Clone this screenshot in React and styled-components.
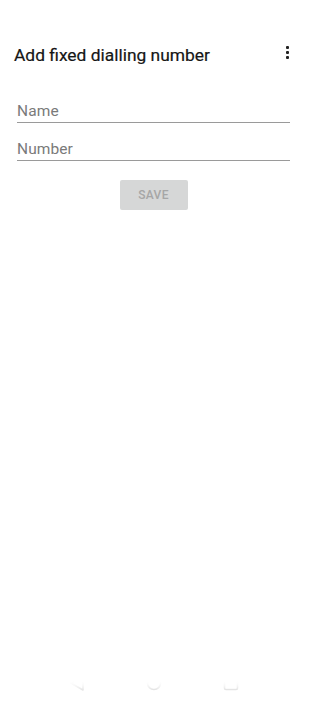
import React from 'react';
import styled, { createGlobalStyle } from 'styled-components';

const Global = createGlobalStyle`
  html, body { margin: 0; padding: 0; background: #fff; }
  body { font-family: Roboto, "Noto Sans", sans-serif; }
`;

const Screen = styled.div`
  width: 307px;
  height: 704px;
  display: flex;
  flex-direction: column;
  background: #ffffff;
`;

const Toolbar = styled.div`
  height: 56px;
  margin-top: 26px;
  display: flex;
  align-items: center;
  justify-content: space-between;
  padding: 0 12px 0 14px;
`;

const Title = styled.div`
  font-size: 17.4px;
  font-weight: 400;
  color: #161616;
  line-height: 20px;
  margin-top: 1px;
  -webkit-text-stroke: 0.2px #161616;
`;

const MoreButton = styled.div`
  display: flex;
  flex-direction: column;
  gap: 2px;
  margin-top: -3px;
  margin-right: 6px;
  span {
    width: 3px;
    height: 3px;
    background: #222;
    border-radius: 1px;
  }
`;

const Form = styled.div`
  display: flex;
  flex-direction: column;
  padding: 19px 17px 0 17px;
`;

const Field = styled.div`
  border-bottom: 1px solid #9a9a9a;
  padding: 0 0 1px 0;
  margin-bottom: ${({ gap }) => gap}px;
  font-size: 15.5px;
  color: #7a7a7a;
  line-height: 20px;
  letter-spacing: 0.1px;
`;

const Save = styled.div`
  align-self: center;
  width: 68px;
  height: 30px;
  margin-top: 3px;
  background: #d6d7d7;
  border-radius: 2px;
  color: #a6a6a6;
  font-size: 12px;
  font-weight: 500;
  display: flex;
  align-items: center;
  justify-content: center;
  letter-spacing: 0.3px;
`;

const Spacer = styled.div`
  flex: 1;
`;

const NavBar = styled.div`
  height: 42px;
  display: flex;
  justify-content: center;
  align-items: center;
`;

const NavSlot = styled.div`
  width: 77px;
  display: flex;
  justify-content: center;
`;

const Fade = () => (
  <defs>
    <linearGradient id="navfade" x1="0" y1="0" x2="0" y2="1">
      <stop offset="0.3" stopColor="#ffffff" stopOpacity="0" />
      <stop offset="1" stopColor="#e4e4e4" />
    </linearGradient>
  </defs>
);

export default function App() {
  return (
    <Screen>
      <Global />
      <Toolbar>
        <Title>Add fixed dialling number</Title>
        <MoreButton><span /><span /><span /></MoreButton>
      </Toolbar>
      <Form>
        <Field gap={16}>Name</Field>
        <Field gap={16}>Number</Field>
        <Save>SAVE</Save>
      </Form>
      <Spacer />
      <NavBar>
        <NavSlot>
          <svg width="16" height="16" viewBox="0 0 16 16">
            <Fade />
            <path d="M2 8 L14 1 L14 15 Z" stroke="url(#navfade)" strokeWidth="1.6" fill="none" strokeLinejoin="round" />
          </svg>
        </NavSlot>
        <NavSlot>
          <svg width="16" height="16" viewBox="0 0 16 16">
            <circle cx="8" cy="8" r="6.5" stroke="url(#navfade)" strokeWidth="1.6" fill="none" />
          </svg>
        </NavSlot>
        <NavSlot>
          <svg width="16" height="16" viewBox="0 0 16 16">
            <rect x="1.5" y="1.5" width="13" height="13" rx="1.5" stroke="url(#navfade)" strokeWidth="1.6" fill="none" />
          </svg>
        </NavSlot>
      </NavBar>
    </Screen>
  );
}
